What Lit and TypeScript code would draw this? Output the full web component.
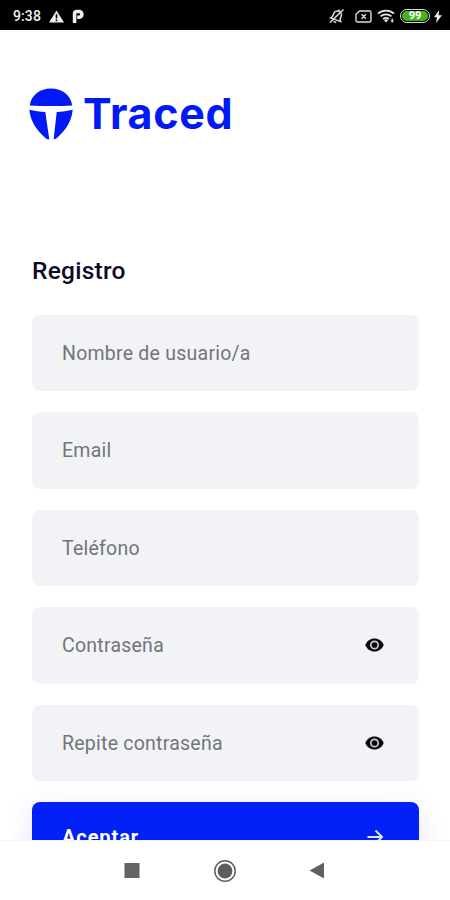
import { LitElement, html, css, nothing } from "lit";
import { customElement } from "lit/decorators.js";

const FIELDS = [
  { label: "Nombre de usuario/a", secret: false },
  { label: "Email", secret: false },
  { label: "Teléfono", secret: false },
  { label: "Contraseña", secret: true },
  { label: "Repite contraseña", secret: true },
];

@customElement("status-bar")
class StatusBar extends LitElement {
  static styles = css`
    :host { display: flex; box-sizing: border-box; height: 30px; flex: none; padding: 2px 8px 0 13px; align-items: center; background: #000; color: #eee; }
    .time { width: 36px; font-size: 14px; line-height: 28px; font-weight: 500; letter-spacing: 0.1px; }
    svg { display: block; flex: none; }
    .parking { margin-left: 8px; }
    .space { flex: 1; }
    .bell { margin-right: 10px; }
    .sim { margin-right: 5px; }
    .wifi { margin-right: 4px; }
    .battery { box-sizing: border-box; width: 30px; height: 14px; padding: 1px; border: 1.5px solid #ddd; border-radius: 7px; }
    .charge { height: 10px; border-radius: 5px; background: #43b51c; color: #fff; font-size: 11px; line-height: 10.5px; font-weight: 700; text-align: center; }
    .bolt { margin-left: 4px; }
  `;
  render() {
    return html`
      <span class="time">9:38</span>
      <svg width="15" height="13" viewBox="0 0 15 13"><path d="M7.5 0.5 15 12.6H0Z" fill="#eee"/><path d="M7.5 4.3v4.2M7.5 9.6v1.7" stroke="#000" stroke-width="1.6"/></svg>
      <svg class="parking" width="12" height="15" viewBox="0 0 12 15"><path d="M2.6 14V4.2A2.2 2.2 0 0 1 4.8 2.5H7a2.9 2.9 0 0 1 0 5.8H5.2" fill="none" stroke="#eee" stroke-width="3.6" stroke-linejoin="round"/></svg>
      <span class="space"></span>
      <svg class="bell" width="16" height="16" viewBox="0 0 16 16" fill="none" stroke="#ddd" stroke-width="1.5"><g transform="rotate(20 8 8)"><path d="M2.6 12h10.8l-1.4-2V7a4 4 0 0 0-8 0v3ZM6.5 14.3h3M8 1v2"/></g><path d="M1 14.5 14.5 1.5"/></svg>
      <svg class="sim" width="17" height="13" viewBox="0 0 17 13" fill="none" stroke="#ddd" stroke-width="1.4"><path d="M4.5 1h10a1.5 1.5 0 0 1 1.5 1.5v8a1.5 1.5 0 0 1-1.5 1.5h-12A1.5 1.5 0 0 1 1 10.5V4.3ZM6.5 4.3l4.4 4.4M10.9 4.3 6.5 8.7"/></svg>
      <svg class="wifi" width="19" height="14" viewBox="0 0 19 14" fill="none" stroke="#e6e6e6" stroke-width="1.8"><path d="M1 4.6a12 12 0 0 1 16 0M3.6 7.4a8.2 8.2 0 0 1 10.8 0M6.1 10a4.6 4.6 0 0 1 5.8 0"/><path d="m9 13.4-2-2.2a3 3 0 0 1 4 0Z" fill="#eee" stroke="none"/><path d="M15.2 9.5v4M13.8 12h3" stroke-width="1.2"/></svg>
      <div class="battery"><div class="charge">99</div></div>
      <svg class="bolt" width="8" height="13" viewBox="0 0 8 13"><path d="M5.2 0 0 7.2h3L2 13l6-7.8H4.6Z" fill="#eee"/></svg>
    `;
  }
}

@customElement("form-field")
class FormField extends LitElement {
  static properties = { label: {}, secret: { type: Boolean } };
  declare label: string;
  declare secret: boolean;
  static styles = css`
    :host { display: flex; box-sizing: border-box; height: 76.5px; flex: none; padding: 0 35px 0 30px; align-items: center; justify-content: space-between; background: #f1f3f7; border-radius: 8px; color: #747577; font-size: 19.5px; line-height: 24px; letter-spacing: 0.24px; }
    span { padding-top: 2px; }
    svg { display: block; }
  `;
  render() {
    return html`<span>${this.label}</span>${this.secret
      ? html`<svg width="19" height="14" viewBox="0 0 19 14"><path d="M0.3 7C2 2.8 5.3 0.5 9.5 0.5S17 2.8 18.7 7c-1.7 4.2-5 6.5-9.2 6.5S2 11.2 0.3 7Z" fill="#08090b"/><circle cx="9.5" cy="7" r="3.7" fill="none" stroke="#c9cbce" stroke-width="1.7"/></svg>`
      : nothing}`;
  }
}

@customElement("nav-bar")
class NavBar extends LitElement {
  static styles = css`
    :host { display: flex; box-sizing: border-box; height: 60px; flex: none; padding: 0 125px 0 124px; align-items: center; justify-content: space-between; background: #fff; border-top: 1px solid #f7f7f9; }
    svg { display: block; }
  `;
  render() {
    return html`
      <svg width="16" height="15"><rect x="0.5" width="15" height="15" fill="#646464"/></svg>
      <svg width="24" height="24" viewBox="0 0 24 24"><circle cx="12" cy="12" r="10.2" fill="none" stroke="#606060" stroke-width="1.5"/><circle cx="12" cy="12" r="7.4" fill="#5e5e5e"/></svg>
      <svg width="16" height="17" viewBox="0 0 16 17"><path d="M15 0.5v16L0.5 8.5Z" fill="#606060"/></svg>
    `;
  }
}

@customElement("app-root")
class AppRoot extends LitElement {
  static styles = css`
    :host { display: flex; flex-direction: column; height: 900px; overflow: hidden; background: #fff; font-family: Roboto, "Liberation Sans", sans-serif; }
    main { flex: 1; min-height: 0; overflow: hidden; }
    .brand { display: flex; align-items: flex-start; padding: 58px 0 0 29px; height: 52px; color: #0019f5; }
    .mark { display: block; flex: none; }
    .name { margin: -1px 0 0 10px; font-family: Inter, sans-serif; font-size: 43px; line-height: 52px; font-weight: 700; letter-spacing: 0.7px; }
    h1 { margin: 116px 0 0 32px; font-size: 24.5px; line-height: 30px; font-weight: 500; letter-spacing: 0.25px; color: #0c0a26; }
    form { display: flex; flex-direction: column; gap: 21px; margin: 28.5px 31px 0 32px; }
    .submit { display: flex; box-sizing: border-box; height: 76px; flex: none; padding: 0 36px 6px 30px; align-items: center; justify-content: space-between; border: 0; border-radius: 8px; background: #0020f5; box-shadow: 0 8px 28px rgba(0, 32, 245, 0.12); color: #fff; font: 700 20px/24px Roboto, sans-serif; letter-spacing: 0.9px; }
    .submit span { padding-bottom: 1px; }
    .submit svg { display: block; }
  `;
  render() {
    return html`
      <status-bar></status-bar>
      <main>
        <div class="brand">
          <svg class="mark" width="44" height="52" viewBox="0 0 44 52" fill="#0019f5"><path d="M0.8 17.4C2.4 7 11 0.6 22 0.6S41.6 7 43.2 17.4c-13 0.8-29 0.8-42.4 0Z"/><path d="M0.3 21.8c5 1.2 10.4 2 16 2.2L20.3 51.6 17.6 51C10.5 45 1.5 35.5 0.3 21.8ZM43.7 21.8c-5 1.2-10.4 2-16 2.2L24.6 51.6 27.2 50.5C34 45 42.5 35.5 43.7 21.8Z"/></svg>
          <span class="name">Traced</span>
        </div>
        <h1>Registro</h1>
        <form>
          ${FIELDS.map((f) => html`<form-field .label=${f.label} .secret=${f.secret}></form-field>`)}
          <button class="submit" type="button">
            <span>Aceptar</span>
            <svg width="16" height="16" viewBox="0 0 16 16" fill="none" stroke="#dfe5ff" stroke-width="2"><path d="M0.5 8h14M8.5 1.5 15 8l-6.5 6.5"/></svg>
          </button>
        </form>
      </main>
      <nav-bar></nav-bar>
    `;
  }
}
